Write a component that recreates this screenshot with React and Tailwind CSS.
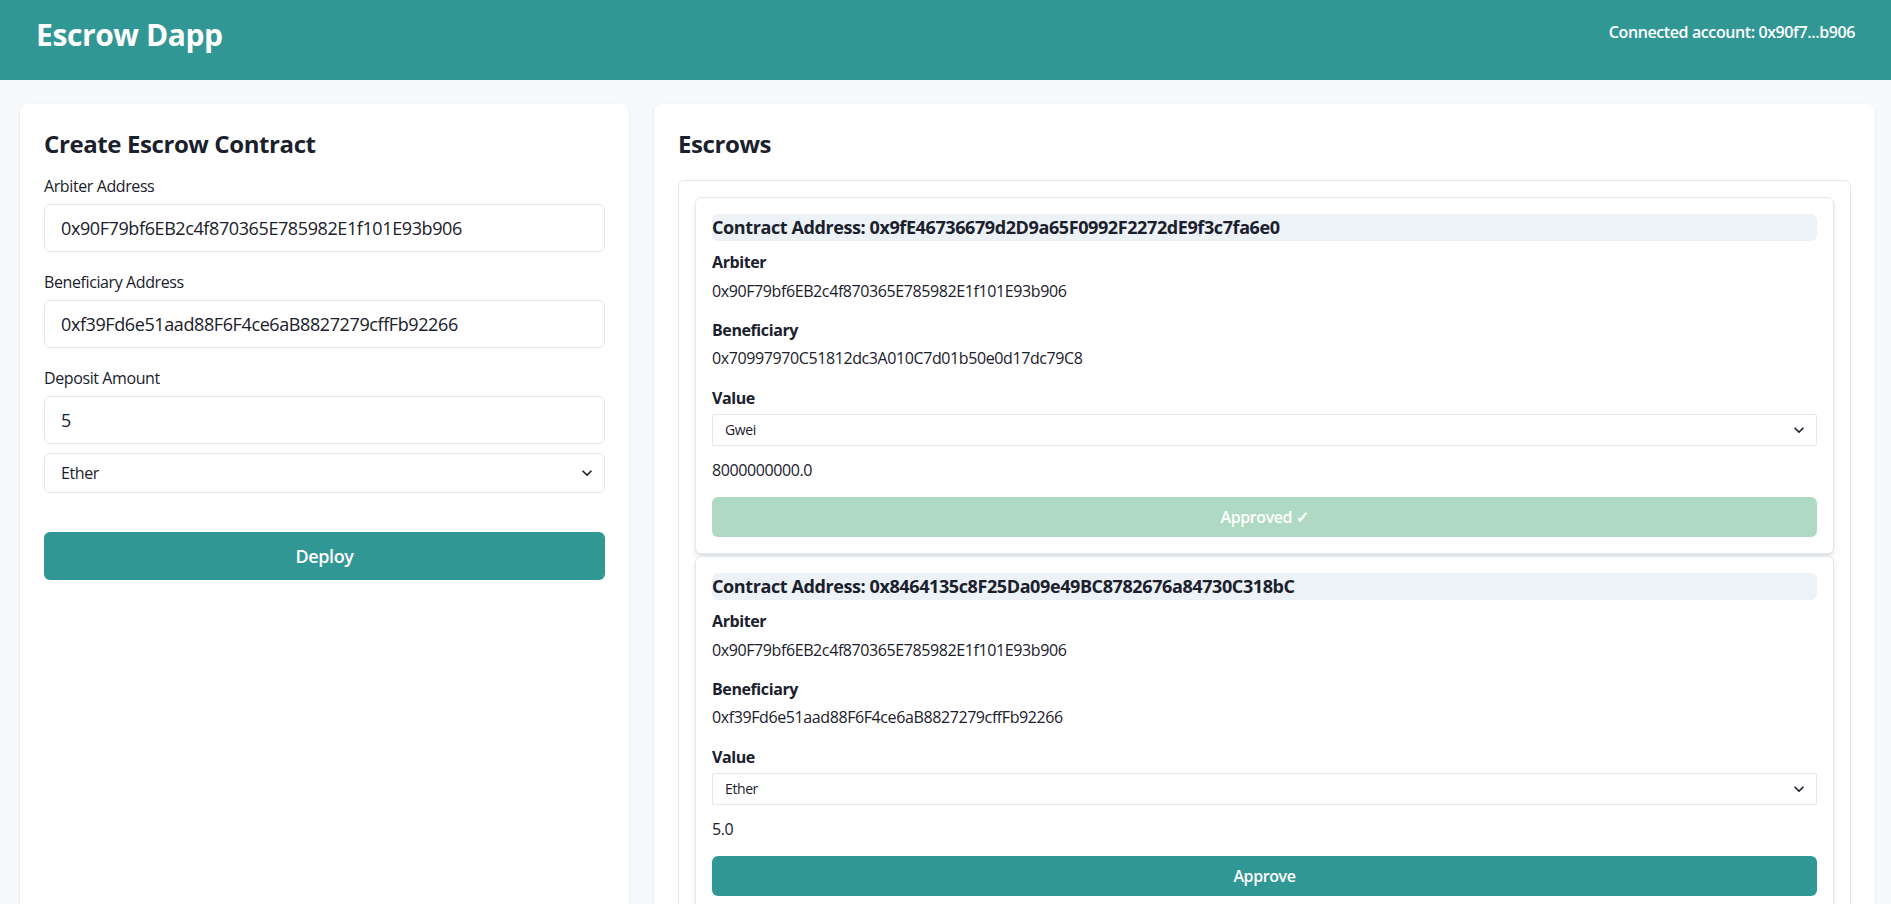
import { useState } from 'react';

const escrows = [
  {
    address: '0x9fE46736679d2D9a65F0992F2272dE9f3c7fa6e0',
    arbiter: '0x90F79bf6EB2c4f870365E785982E1f101E93b906',
    beneficiary: '0x70997970C51812dc3A010C7d01b50e0d17dc79C8',
    unit: 'Gwei',
    amount: '8000000000.0',
    approved: true,
  },
  {
    address: '0x8464135c8F25Da09e49BC8782676a84730C318bC',
    arbiter: '0x90F79bf6EB2c4f870365E785982E1f101E93b906',
    beneficiary: '0xf39Fd6e51aad88F6F4ce6aB8827279cffFb92266',
    unit: 'Ether',
    amount: '5.0',
    approved: false,
  },
];

function Chevron({ className }) {
  return (
    <svg viewBox="0 0 24 24" className={className} fill="currentColor" aria-hidden="true">
      <path d="M16.59 8.59L12 13.17 7.41 8.59 6 10l6 6 6-6z" />
    </svg>
  );
}

function UnitSelect({ value, size = 'md' }) {
  const [unit, setUnit] = useState(value);
  const small = size === 'sm';

  return (
    <div className="relative">
      <select
        value={unit}
        onChange={(e) => setUnit(e.target.value)}
        className={
          small
            ? 'h-8 w-full appearance-none rounded-[2px] border border-[#e2e8f0] bg-white pl-3 text-sm text-[#1a202c] outline-none'
            : 'h-10 w-full appearance-none rounded-md border border-[#e2e8f0] bg-white pl-4 text-base text-[#1a202c] outline-none'
        }
      >
        <option>Ether</option>
        <option>Gwei</option>
        <option>Wei</option>
      </select>
      <Chevron className="pointer-events-none absolute right-2 top-1/2 h-5 w-5 -translate-y-1/2 text-[#1a202c]" />
    </div>
  );
}

function Field({ label, value, className = '' }) {
  return (
    <div className={className}>
      <label className="mb-1.5 block text-base leading-6">{label}</label>
      <input
        defaultValue={value}
        className="h-12 w-full rounded-md border border-[#e2e8f0] px-4 text-lg text-[#1a202c] outline-none"
      />
    </div>
  );
}

function EscrowCard({ escrow }) {
  return (
    <div className="rounded-md border border-[#e2e8f0] bg-white p-4 shadow-md">
      <div className="rounded-md bg-[#edf2f7] text-lg font-bold leading-[27px]">
        Contract Address: {escrow.address}
      </div>
      <div className="mt-[9px] font-bold leading-6">Arbiter</div>
      <div className="mt-[5px] leading-6">{escrow.arbiter}</div>
      <div className="mt-[15px] font-bold leading-6">Beneficiary</div>
      <div className="mt-1 leading-6">{escrow.beneficiary}</div>
      <div className="mt-4 font-bold leading-6">Value</div>
      <div className="mt-1">
        <UnitSelect value={escrow.unit} size="sm" />
      </div>
      <div className="mt-3 leading-6">{escrow.amount}</div>
      {escrow.approved ? (
        <button
          disabled
          className="mt-[15px] h-10 w-full rounded-md bg-[#afd9c3] font-semibold text-white"
        >
          Approved ✓
        </button>
      ) : (
        <button className="mt-[15px] h-10 w-full rounded-md bg-[#319795] font-semibold text-white">
          Approve
        </button>
      )}
    </div>
  );
}

export default function App() {
  return (
    <div className="min-h-screen bg-[#f7fafc] font-['Open_Sans',sans-serif] tracking-tight text-[#1a202c]">
      <header className="flex h-20 items-start justify-between bg-[#319795] px-9 text-white">
        <h1 className="pt-[17px] text-3xl font-bold">Escrow Dapp</h1>
        <div className="pt-5 text-base font-semibold leading-6">Connected account: 0x90f7...b906</div>
      </header>

      <main className="grid grid-cols-[609px_1fr] gap-[25px] pb-6 pl-5 pr-4 pt-6">
        <section className="rounded-lg bg-white p-6 shadow-sm">
          <h2 className="text-2xl font-bold leading-8">Create Escrow Contract</h2>
          <Field className="mt-[14px]" label="Arbiter Address" value="0x90F79bf6EB2c4f870365E785982E1f101E93b906" />
          <Field className="mt-[18px]" label="Beneficiary Address" value="0xf39Fd6e51aad88F6F4ce6aB8827279cffFb92266" />
          <Field className="mt-[18px]" label="Deposit Amount" value="5" />
          <div className="mt-[9px]">
            <UnitSelect value="Ether" />
          </div>
          <button className="mt-[39px] h-12 w-full rounded-md bg-[#319795] text-lg font-semibold text-white">
            Deploy
          </button>
        </section>

        <section className="rounded-lg bg-white p-6 shadow-sm">
          <h2 className="text-2xl font-bold leading-8">Escrows</h2>
          <div className="mt-5 rounded-md border border-[#e2e8f0] p-4">
            <div className="flex flex-col gap-[2px]">
              {escrows.map((escrow) => (
                <EscrowCard key={escrow.address} escrow={escrow} />
              ))}
            </div>
          </div>
        </section>
      </main>
    </div>
  );
}
